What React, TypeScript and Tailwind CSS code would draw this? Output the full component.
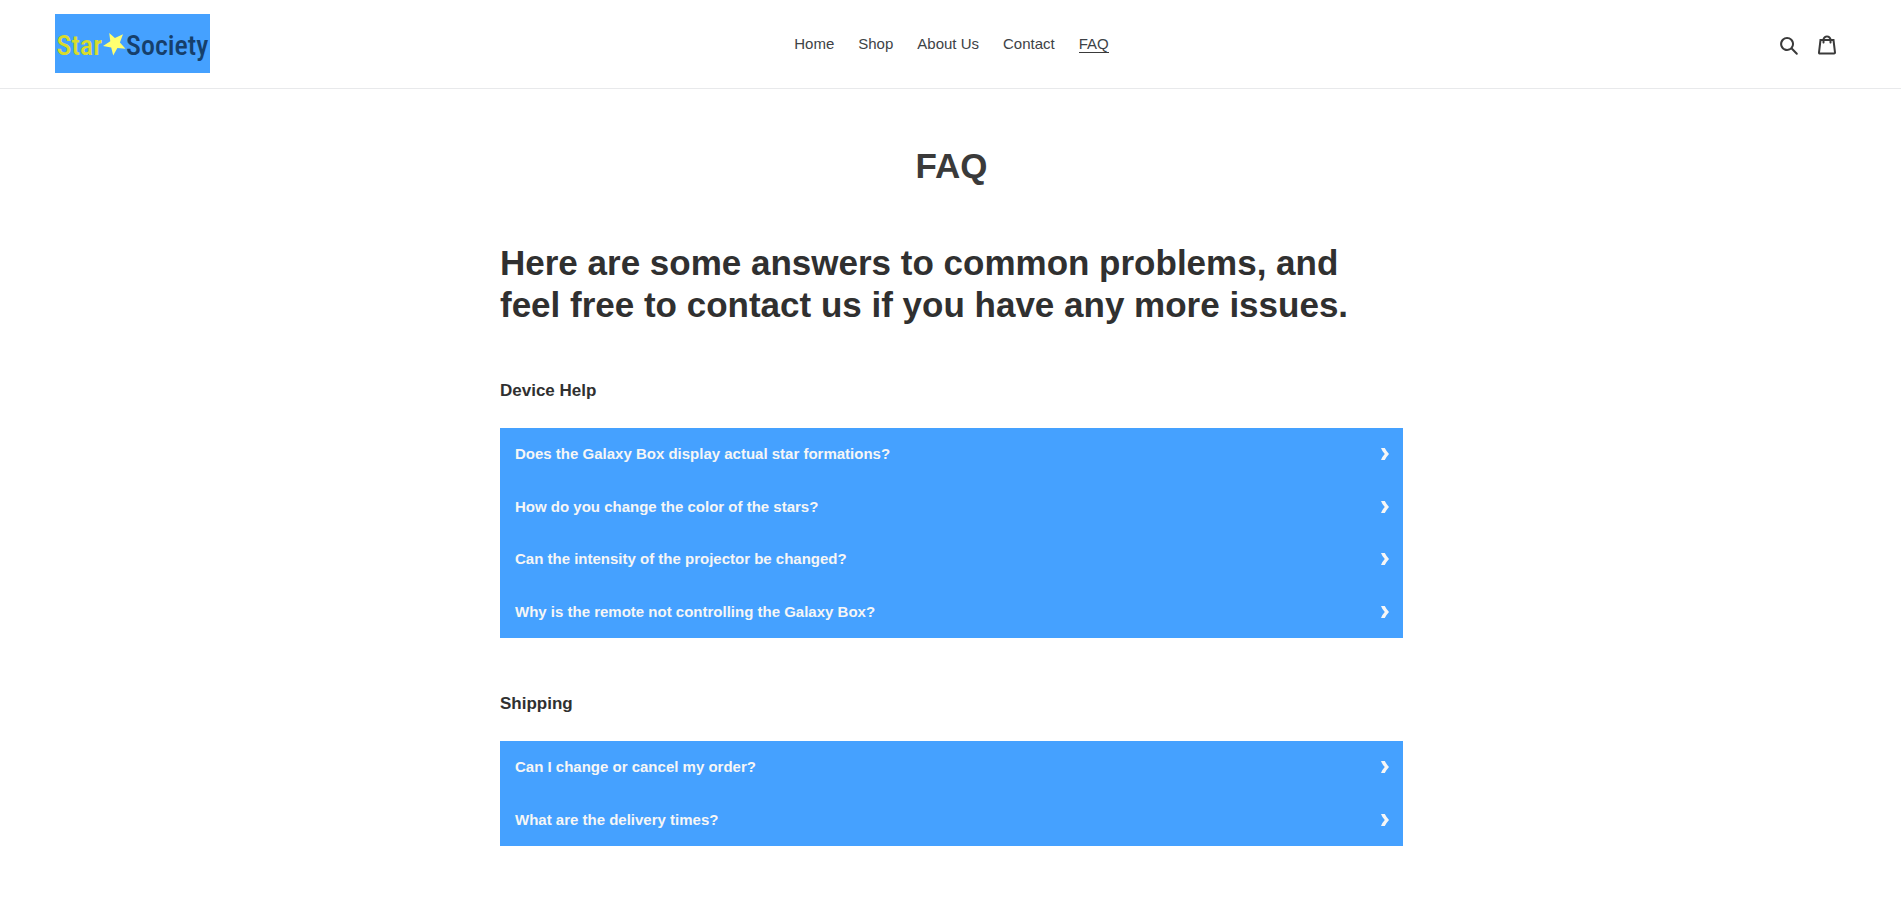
import { useState } from "react";

type Entry = { question: string; answer: string };
type Section = { title: string; entries: Entry[] };

const links = ["Home", "Shop", "About Us", "Contact", "FAQ"];

const sections: Section[] = [
  {
    title: "Device Help",
    entries: [
      { question: "Does the Galaxy Box display actual star formations?", answer: "" },
      { question: "How do you change the color of the stars?", answer: "" },
      { question: "Can the intensity of the projector be changed?", answer: "" },
      { question: "Why is the remote not controlling the Galaxy Box?", answer: "" },
    ],
  },
  {
    title: "Shipping",
    entries: [
      { question: "Can I change or cancel my order?", answer: "" },
      { question: "What are the delivery times?", answer: "" },
    ],
  },
];

function Logo() {
  return (
    <a
      href="#home"
      className="flex h-[59px] w-[155px] items-center justify-center bg-[#45a1ff] font-['Roboto_Condensed','Open_Sans_Condensed','Open_Sans',sans-serif] text-[28px] leading-none font-medium"
    >
      <span className="pt-1 text-[#d9dc2a]">Star</span>
      <svg viewBox="0 0 24 24" className="h-6 w-6 shrink-0" fill="#ffff70" aria-hidden="true">
        <path d="M7.2 1 L12.9 6 L21 2.2 L17.9 10.4 L23.5 16.8 L15.4 16.1 L11.2 23.5 L9.2 15.6 L1 14 L8.3 9.3 Z" />
      </svg>
      <span className="pt-1 text-[#163f6b]">Society</span>
    </a>
  );
}

function Header() {
  return (
    <header className="grid grid-cols-[1fr_auto_1fr] items-center border-b border-[#e8e9eb] pt-[14px] pr-[53px] pb-[15px] pl-[55px]">
      <Logo />
      <nav className="flex gap-6 pt-px text-[15px] leading-[17px] text-[#3d4246]">
        {links.map((label) => (
          <a
            key={label}
            href={`#${label.toLowerCase().replace(" ", "-")}`}
            aria-current={label === "FAQ" ? "page" : undefined}
            className={
              label === "FAQ" ? "border-b border-[#3a3a3a]" : "border-b border-transparent"
            }
          >
            {label}
          </a>
        ))}
      </nav>
      <div className="flex justify-end gap-[18px] pt-[3px] pr-[11px] text-[#3a3a3a]">
        <button type="button" aria-label="Search">
          <svg viewBox="0 0 37 40" className="h-5 w-5" fill="currentColor" aria-hidden="true">
            <path d="M35.6 36l-9.8-9.8c4.1-5.4 3.6-13.2-1.3-18.1-5.4-5.4-14.2-5.4-19.7 0-5.4 5.4-5.4 14.2 0 19.7 2.6 2.6 6.1 4.1 9.8 4.1 3 0 5.9-1 8.3-2.8l9.8 9.8c.4.4.9.6 1.4.6s1-.2 1.4-.6c.9-.9.9-2.1.1-2.9zm-20.9-8.2c-2.6 0-5.1-1-7-2.9-3.9-3.9-3.9-10.1 0-14C9.6 9 12.2 8 14.7 8s5.1 1 7 2.9c3.9 3.9 3.9 10.1 0 14-1.9 1.9-4.4 2.9-7 2.9z" />
          </svg>
        </button>
        <a href="#cart" aria-label="Cart">
          <svg viewBox="0 0 37 40" className="h-5 w-5" fill="currentColor" aria-hidden="true">
            <path d="M36.5 34.8L33.3 8h-5.9C26.7 3.9 23 .8 18.5.8S10.3 3.9 9.6 8H3.7L.5 34.8c-.2 1.5.4 2.4.9 3 .5.5 1.4 1.2 3.1 1.2h28c1.3 0 2.4-.4 3.1-1.3.7-.7 1-1.8.9-2.9zm-18-30c2.2 0 4.1 1.4 4.7 3.2h-9.5c.7-1.9 2.6-3.2 4.8-3.2zM4.5 35l2.8-23h2.2v3c0 1.1.9 2 2 2s2-.9 2-2v-3h10v3c0 1.1.9 2 2 2s2-.9 2-2v-3h2.2l2.8 23h-28z" />
          </svg>
        </a>
      </div>
    </header>
  );
}

function Question({ entry }: { entry: Entry }) {
  const [open, setOpen] = useState(false);
  return (
    <button
      type="button"
      aria-expanded={open}
      onClick={() => setOpen(!open)}
      className="flex w-full cursor-pointer items-center justify-between py-[15px] pr-[14px] pl-[15px] text-left text-[15px] leading-normal font-bold text-[#f6f6f6]"
    >
      {entry.question}
      <svg
        viewBox="0 0 8 12"
        className={open ? "h-3 w-2 rotate-90" : "h-3 w-2"}
        fill="currentColor"
        aria-hidden="true"
      >
        <path d="M0 0 H3.8 Q5.4 3.2 8 6 Q5.4 8.8 3.8 12 H0 Q1.2 8.6 3.8 6 Q1.2 3.4 0 0 Z" />
      </svg>
    </button>
  );
}

export default function App() {
  return (
    <div className="min-h-screen bg-white font-['Liberation_Sans',Arial,sans-serif] text-[#303030]">
      <Header />
      <main className="mx-auto max-w-[905px] pt-14 pb-14 pl-0.5">
        <h1 className="text-center text-[35px] leading-[42px] font-bold text-[#3a3a3a]">FAQ</h1>
        <h2 className="mt-[55px] text-[35px] leading-[42px] font-bold">
          Here are some answers to common problems, and feel free to contact us if you have any more
          issues.
        </h2>
        <div className="mt-[55px] flex flex-col gap-14">
          {sections.map((section) => (
            <section key={section.title}>
              <h3 className="text-[17px] leading-5 font-bold">{section.title}</h3>
              <div className="mt-[27px] bg-[#45a1ff]">
                {section.entries.map((entry) => (
                  <Question key={entry.question} entry={entry} />
                ))}
              </div>
            </section>
          ))}
        </div>
      </main>
    </div>
  );
}
